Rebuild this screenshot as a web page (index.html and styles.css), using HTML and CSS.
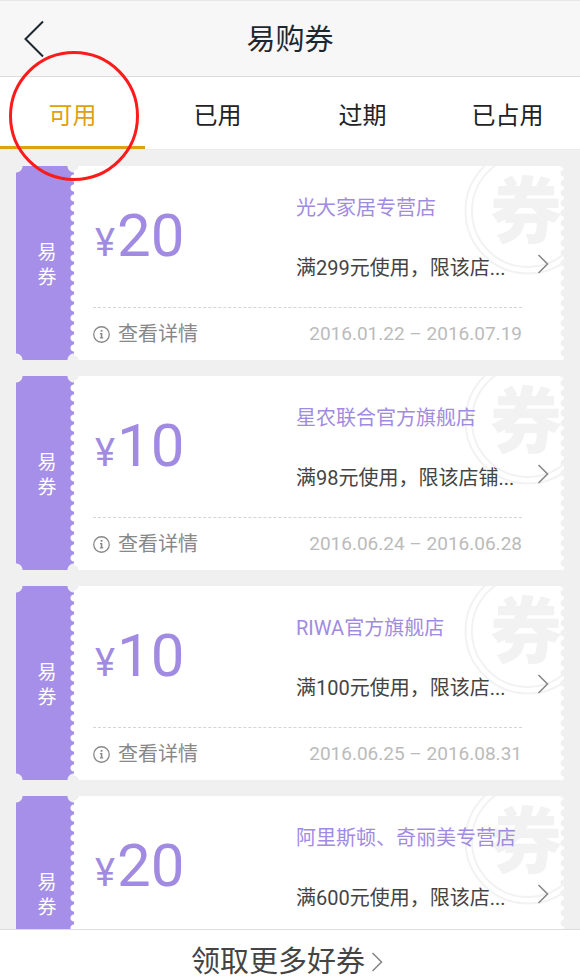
FILE: index.html
```html
<!DOCTYPE html>
<html lang="zh-CN">
<head>
<meta charset="utf-8">
<meta name="viewport" content="width=device-width, initial-scale=1">
<title>易购券</title>
<link rel="stylesheet" href="styles.css">
</head>
<body>
<svg class="sprites" aria-hidden="true">
  <symbol id="chevron" viewBox="0 0 12 20"><path d="M1.5 1 10.5 10 1.5 19" fill="none" stroke="currentColor" stroke-width="1.6"/></symbol>
  <symbol id="info" viewBox="0 0 16 16"><circle cx="8" cy="8" r="7.3" fill="none" stroke="currentColor" stroke-width="1.2"/><path d="M7.2 3.8h1.7v1.6H7.2zM6.5 6.7h2.3v4h.8v1H6.5v-1h.8v-3h-.8z" fill="currentColor"/></symbol>
  <symbol id="rings" viewBox="0 0 128 128"><g fill="none" stroke="currentColor"><circle cx="64" cy="64" r="62.5" stroke-width="2"/><circle cx="64" cy="64" r="56" stroke-width="2"/></g></symbol>
</svg>
<div class="app">
  <header class="bar">
    <button class="back" type="button" aria-label="返回"><svg viewBox="0 0 20 38"><path d="M19 1.5 1.5 19 19 36.5" fill="none" stroke="currentColor" stroke-width="2"/></svg></button>
    <h1 class="title">易购券</h1>
  </header>
  <nav class="tabs">
    <a class="tab active" href="#usable">可用</a>
    <a class="tab" href="#used">已用</a>
    <a class="tab" href="#expired">过期</a>
    <a class="tab" href="#held">已占用</a>
  </nav>
  <main class="list">
    <article class="ticket">
      <div class="stub"><span>易</span><span>券</span></div>
      <div class="body">
        <div class="stamp" aria-hidden="true"><svg><use href="#rings"/></svg><span>券</span></div>
        <div class="offer">
          <p class="amount"><small>¥</small>20</p>
          <div class="info"><h2>光大家居专营店</h2><a class="terms" href="#t1">满299元使用，限该店...<svg class="chevron"><use href="#chevron"/></svg></a></div>
        </div>
        <div class="meta"><button type="button"><svg><use href="#info"/></svg>查看详情</button><time>2016.01.22 – 2016.07.19</time></div>
      </div>
    </article>
    <article class="ticket">
      <div class="stub"><span>易</span><span>券</span></div>
      <div class="body">
        <div class="stamp" aria-hidden="true"><svg><use href="#rings"/></svg><span>券</span></div>
        <div class="offer">
          <p class="amount"><small>¥</small>10</p>
          <div class="info"><h2>星农联合官方旗舰店</h2><a class="terms" href="#t2">满98元使用，限该店铺...<svg class="chevron"><use href="#chevron"/></svg></a></div>
        </div>
        <div class="meta"><button type="button"><svg><use href="#info"/></svg>查看详情</button><time>2016.06.24 – 2016.06.28</time></div>
      </div>
    </article>
    <article class="ticket">
      <div class="stub"><span>易</span><span>券</span></div>
      <div class="body">
        <div class="stamp" aria-hidden="true"><svg><use href="#rings"/></svg><span>券</span></div>
        <div class="offer">
          <p class="amount"><small>¥</small>10</p>
          <div class="info"><h2>RIWA官方旗舰店</h2><a class="terms" href="#t3">满100元使用，限该店...<svg class="chevron"><use href="#chevron"/></svg></a></div>
        </div>
        <div class="meta"><button type="button"><svg><use href="#info"/></svg>查看详情</button><time>2016.06.25 – 2016.08.31</time></div>
      </div>
    </article>
    <article class="ticket">
      <div class="stub"><span>易</span><span>券</span></div>
      <div class="body">
        <div class="stamp" aria-hidden="true"><svg><use href="#rings"/></svg><span>券</span></div>
        <div class="offer">
          <p class="amount"><small>¥</small>20</p>
          <div class="info"><h2>阿里斯顿、奇丽美专营店</h2><a class="terms" href="#t4">满600元使用，限该店...<svg class="chevron"><use href="#chevron"/></svg></a></div>
        </div>
      </div>
    </article>
  </main>
  <footer class="more"><a href="#more">领取更多好券<svg class="chevron"><use href="#chevron"/></svg></a></footer>
</div>
</body>
</html>
```
FILE: styles.css
```css
*, *::after { box-sizing: border-box; }
body {
  margin: 0;
  background: #f0f0f0;
  color: #444;
  font: 20px/28px Roboto, "Noto Sans CJK SC", sans-serif;
}
h1, h2, p { margin: 0; font-weight: 400; }
a { color: inherit; text-decoration: none; }
button { padding: 0; border: 0; background: none; color: inherit; font: inherit; }
svg { display: block; }
.sprites { position: absolute; width: 0; height: 0; }

.app { display: flex; flex-direction: column; height: 100vh; overflow: hidden; }

.bar {
  display: grid;
  grid-template-columns: 72px 1fr 72px;
  align-items: center;
  flex: none;
  height: 77px;
  background: #f7f7f7;
  border-top: 1px solid #e8e8e8;
  border-bottom: 1px solid #dcdcdc;
  color: #1c2730;
}
.back { padding-left: 24px; }
.back svg { width: 20px; height: 38px; }
.title { padding-top: 2px; text-align: center; font-size: 29px; line-height: 40px; }

.tabs { display: flex; flex: none; height: 73px; background: #fff; border-bottom: 1px solid #ececec; }
.tab {
  position: relative;
  flex: 1;
  padding-top: 20px;
  border-bottom: 3px solid transparent;
  color: #222;
  font-size: 24px;
  line-height: 38px;
  text-align: center;
}
.tab.active { border-color: #dfa013; color: #dfa013; }
.tab.active::after {
  content: "";
  position: absolute;
  z-index: 2;
  top: -26px;
  left: 50%;
  width: 130px;
  height: 130px;
  margin-left: -64px;
  border: 3px solid #fb1b1b;
  border-radius: 50%;
  pointer-events: none;
}

.list {
  display: flex;
  flex: 1;
  flex-direction: column;
  gap: 16px;
  min-height: 0;
  padding: 16px;
  overflow: hidden;
}
.ticket { display: flex; flex: none; min-height: 194px; }
.stub {
  display: flex;
  flex-direction: column;
  align-items: center;
  justify-content: center;
  width: 58px;
  padding: 4px 0 0 4px;
  background:
    radial-gradient(circle at 0 0, #f0f0f0 6px, transparent 7px),
    radial-gradient(circle at 0 100%, #f0f0f0 6px, transparent 7px),
    radial-gradient(circle at 100% 0, #f0f0f0 6px, transparent 7px),
    radial-gradient(circle at 100% 100%, #f0f0f0 6px, transparent 7px),
    radial-gradient(circle at 100% 50%, #fff 3px, transparent 4px) right 7px / 8px 10px repeat-y,
    #a68fe8;
  color: #fff;
  font-size: 19px;
  line-height: 25px;
}
.body {
  position: relative;
  flex: 1;
  padding: 24px 42px 0 19px;
  overflow: hidden;
  background:
    radial-gradient(circle at 0 0, #f0f0f0 4px, transparent 5px),
    radial-gradient(circle at 0 100%, #f0f0f0 4px, transparent 5px),
    radial-gradient(circle at 100% 50%, #f0f0f0 3px, transparent 4px) right 2px / 6px 10px repeat-y,
    #fff;
}
.stamp {
  position: absolute;
  top: -19px;
  right: -28px;
  width: 128px;
  height: 128px;
  color: #f2f2f2;
}
.stamp svg { width: 128px; height: 128px; }
.stamp span {
  position: absolute;
  top: 28px;
  left: 26px;
  font-size: 72px;
  font-weight: 900;
  line-height: 76px;
}
.offer {
  position: relative;
  display: grid;
  grid-template-columns: 203px 1fr;
  height: 118px;
  border-bottom: 1px dashed #d5d5d5;
}
.amount { padding: 10px 0 0 2px; color: #a18be2; font-size: 60px; line-height: 72px; }
.amount small { margin-right: 2px; font-size: 38px; }
.info { display: flex; flex-direction: column; gap: 32px; padding-top: 4px; white-space: nowrap; }
.info h2 { color: #a18be2; font-size: 20px; line-height: 28px; }
.terms { display: flex; align-items: flex-start; justify-content: space-between; margin-right: -27px; }
.chevron { width: 12px; height: 20px; color: #888; }
.meta { display: flex; align-items: center; justify-content: space-between; height: 52px; color: #888; }
.meta button { display: flex; align-items: center; gap: 8px; }
.meta svg { width: 17px; height: 17px; }
.meta time { color: #bbb; font-size: 19px; }

.more { flex: none; height: 51px; padding: 12px 6px 0 0; background: #fff; border-top: 1px solid #ddd; }
.more a { display: flex; align-items: center; justify-content: center; gap: 6px; font-size: 29px; line-height: 40px; }
```
